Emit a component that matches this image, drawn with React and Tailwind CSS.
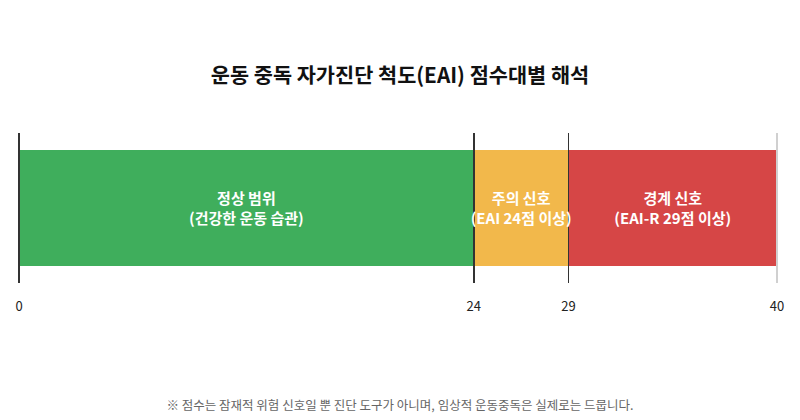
import React from "react";

const segs = [
  { from: 0, to: 24, color: "bg-[#3fae5c]", l1: "정상 범위", l2: "(건강한 운동 습관)" },
  { from: 24, to: 29, color: "bg-[#f2b84b]", l1: "주의 신호", l2: "(EAI 24점 이상)" },
  { from: 29, to: 40, color: "bg-[#d64646]", l1: "경계 신호", l2: "(EAI-R 29점 이상)" },
];
const ticks = [
  { v: 0, cls: "bg-[#333333]" },
  { v: 24, cls: "bg-[#333333]" },
  { v: 29, cls: "bg-[#333333]" },
  { v: 40, cls: "bg-[#d0d0d0]" },
];

export default function App() {
  const font = { fontFamily: '"Noto Sans CJK KR", "Noto Sans", sans-serif' };
  return (
    <div className="w-[800px] h-[420px] bg-white flex flex-col" style={font}>
      <div className="mt-[60px] h-[28px] leading-[28px] text-[20.8px] font-bold text-[#111111] text-center">
        운동 중독 자가진단 척도(EAI) 점수대별 해석
      </div>
      <div className="mt-[45px] ml-[19px] w-[758px] relative h-[150px] flex flex-col justify-center">
        <div className="flex h-[116px] w-full">
          {segs.map((s) => (
            <div
              key={s.l1}
              className={`${s.color} h-full flex flex-col items-center justify-center text-white font-bold text-[15px] leading-[20px]`}
              style={{ width: `${((s.to - s.from) / 40) * 100}%` }}
            >
              <div className="relative z-10">{s.l1}</div>
              <div className="relative z-10 whitespace-nowrap">{s.l2}</div>
            </div>
          ))}
        </div>
        {ticks.map((t) => (
          <div
            key={t.v}
            className={`absolute top-0 bottom-0 w-[1.5px] ${t.cls}`}
            style={{ left: `calc(${(t.v / 40) * 100}% - 0.75px)` }}
          />
        ))}
      </div>
      <div className="ml-[19px] w-[758px] relative h-[22px] mt-[12px]">
        {ticks.map((t) => (
          <div
            key={t.v}
            className="absolute top-0 -translate-x-1/2 text-[13px] leading-[22px] text-[#222222]"
            style={{ left: `${(t.v / 40) * 100}%` }}
          >
            {t.v}
          </div>
        ))}
      </div>
      <div className="mt-[79px] text-center text-[12.5px] leading-[18px] text-[#666666]">
        ※ 점수는 잠재적 위험 신호일 뿐 진단 도구가 아니며, 임상적 운동중독은 실제로는 드뭅니다.
      </div>
    </div>
  );
}
